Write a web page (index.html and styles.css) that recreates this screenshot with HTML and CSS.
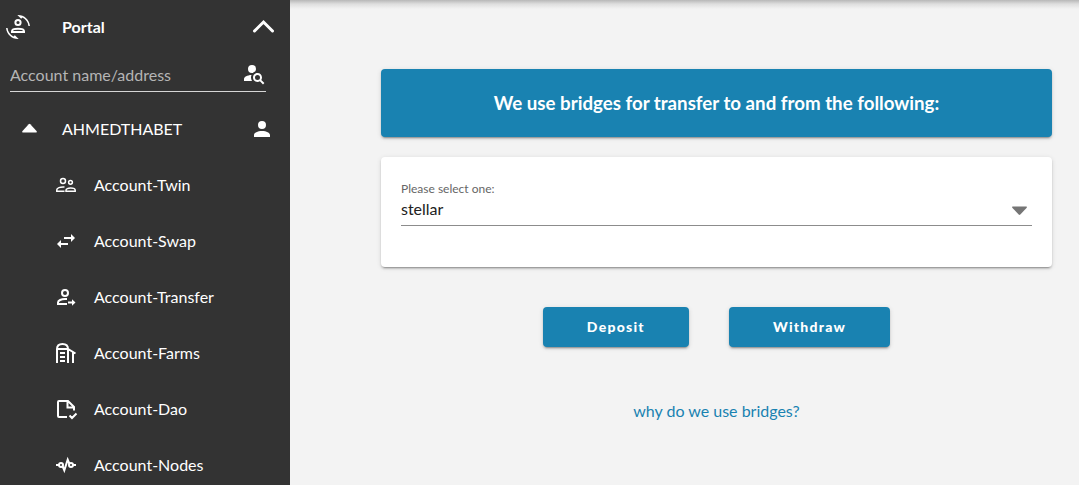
FILE: index.html
```
<!DOCTYPE html>
<html lang="en">
<head>
<meta charset="utf-8">
<title>Portal</title>
<link rel="stylesheet" href="styles.css">
</head>
<body>
<div class="app">
  <nav class="sidebar">
    <button class="portal" type="button" aria-expanded="true">
      <svg class="icon" viewBox="0 0 24 24"><path class="fill" d="M12 0L11.34.03L15.15 3.84L16.5 2.5C19.75 4.07 22.09 7.24 22.45 11H23.95C23.44 4.84 18.29 0 12 0M.05 13C.56 19.16 5.71 24 12 24L12.66 23.97L8.85 20.16L7.5 21.5C4.25 19.94 1.91 16.76 1.55 13H.05"/><circle cx="12" cy="7.500" r="2.600"/><path d="M6 17v-.8c0-1.500 3-2.400 6-2.400s6 .9 6 2.400v.8z"/></svg>
      <span class="portal-title">Portal</span>
      <svg class="icon" viewBox="0 0 24 24"><path class="chevron" d="M3.500 16L12.500 7l9 9"/></svg>
    </button>
    <div class="search">
      <input class="search-input" type="text" placeholder="Account name/address" aria-label="Account name/address">
      <svg class="icon" viewBox="0 0 24 24"><path class="fill" d="M15.5,12C18,12 20,14 20,16.5C20,17.38 19.75,18.21 19.31,18.9L22.39,22L21,23.39L17.88,20.32C17.19,20.75 16.37,21 15.5,21C13,21 11,19 11,16.5C11,14 13,12 15.5,12M15.5,14A2.5,2.5 0 0,0 13,16.5A2.5,2.5 0 0,0 15.5,19A2.5,2.5 0 0,0 18,16.5A2.5,2.5 0 0,0 15.5,14M10,4A4,4 0 0,1 14,8C14,8.91 13.69,9.75 13.18,10.43C12.32,10.75 11.55,11.26 10.91,11.9L10,12A4,4 0 0,1 6,8A4,4 0 0,1 10,4M2,20V18C2,15.88 5.31,14.14 9.5,14C9.18,14.78 9,15.62 9,16.5C9,17.79 9.38,19 10,20H2Z"/></svg>
    </div>
    <button class="account" type="button" aria-expanded="true">
      <svg class="icon" viewBox="0 0 24 24"><path class="fill" d="M4.700 15.500Q3.500 15.200 4.500 14L10.700 7.200q.8-.8 1.600 0L18.500 14q1 1.200-.2 1.500z"/></svg>
      <span class="account-name">AHMEDTHABET</span>
      <svg class="icon" viewBox="0 0 24 24"><path class="fill" d="M12,4A4,4 0 0,1 16,8A4,4 0 0,1 12,12A4,4 0 0,1 8,8A4,4 0 0,1 12,4M12,14C16.42,14 20,15.79 20,18V20H4V18C4,15.79 7.58,14 12,14Z"/></svg>
    </button>
    <ul class="menu">
      <li><a class="menu-item" href="#twin">
        <svg class="icon thin" viewBox="0 0 24 24"><circle cx="9" cy="8" r="2.500"/><circle cx="16.500" cy="9.300" r="1.900"/><path d="M10.500 18.200H2.800v-1.400c0-1.800 3.200-3 7.700-2.700M12 18.200v-1c0-1.300 2-2.200 4.600-2.200s4.600.9 4.600 2.200v1z"/></svg>
        Account-Twin</a></li>
      <li><a class="menu-item" href="#swap">
        <svg class="icon" viewBox="0 0 24 24"><path class="fill" d="M21,9L17,5V8H10V10H17V13M7,11L3,15L7,19V16H14V14H7V11Z"/></svg>
        Account-Swap</a></li>
      <li><a class="menu-item" href="#transfer">
        <svg class="icon" viewBox="0 0 24 24"><circle cx="11" cy="8" r="3"/><path d="M13 19H4v-1.500c0-2 3.200-3.500 7-3.500h2"/><path class="fill" d="M14 16.500h4v-2.300l3.500 3.300-3.500 3.300v-2.300h-4z"/></svg>
        Account-Transfer</a></li>
      <li><a class="menu-item" href="#farms">
        <svg class="icon" viewBox="0 0 24 24"><path d="M3 22V8c0-3 2-5 5.500-5S14 5 14 8v14M3 8h11l7.500 4.500M19 11.500V22M6 12h5M6 16h5M6 20h5"/></svg>
        Account-Farms</a></li>
      <li><a class="menu-item" href="#dao">
        <svg class="icon" viewBox="0 0 24 24"><path d="M13 20H5q-1 0-1-1V5q0-1 1-1h9l6 6v3.500M13.500 4v6.500H20M15.500 18.500l2.500 2.500 4.500-4.500"/></svg>
        Account-Dao</a></li>
      <li><a class="menu-item" href="#nodes">
        <svg class="icon" viewBox="0 0 24 24"><path d="M2 12h3M19 12h3M8.500 13l1.800 4.300L13.700 6.700l1.800 4.300"/><circle cx="7" cy="12" r="2"/><circle cx="17" cy="12" r="2"/></svg>
        Account-Nodes</a></li>
    </ul>
  </nav>
  <main class="main">
    <h3 class="banner">We use bridges for transfer to and from the following:</h3>
    <section class="card">
      <label class="field-label" for="bridge">Please select one:</label>
      <div class="field">
        <select class="select" id="bridge"><option>stellar</option></select>
        <svg class="icon select-arrow" viewBox="0 0 24 24"><path d="M4.700 8.500Q3.500 8.800 4.500 10l6.200 6.600q.8.8 1.600 0L18.500 10q1-1.200-.2-1.500z"/></svg>
      </div>
    </section>
    <div class="actions">
      <button class="button" type="button">Deposit</button>
      <button class="button" type="button">Withdraw</button>
    </div>
    <a class="help" href="#why">why do we use bridges?</a>
  </main>
</div>
</body>
</html>
```
FILE: styles.css
```
* {
  box-sizing: border-box;
}

body {
  margin: 0;
  font-family: Lato, "Open Sans", sans-serif;
  font-size: 16px;
  line-height: 24px;
  color: #212121;
  background: #f3f3f3;
}

button,
input,
select {
  font: inherit;
  color: inherit;
  background: none;
  border: 0;
  padding: 0;
}

.app {
  display: flex;
  height: 100vh;
}

.sidebar {
  flex: 0 0 290px;
  overflow: hidden;
  color: #fff;
  background: #333;
}

.icon {
  flex: none;
  width: 24px;
  height: 24px;
  fill: none;
  stroke: #fff;
  stroke-width: 2;
}

.icon .fill {
  fill: #fff;
  stroke: none;
}

.icon .chevron {
  stroke-width: 3;
  stroke-linecap: round;
}

.thin {
  stroke-width: 1.5;
}

.portal {
  display: flex;
  align-items: center;
  width: 100%;
  height: 54px;
  padding: 0 15px 0 6px;
  text-align: left;
}

.portal-title {
  flex: 1;
  padding-left: 32px;
  font-weight: 700;
}

.search {
  display: flex;
  align-items: center;
  height: 38px;
  margin: 0 24px 9px 10px;
  border-bottom: 1px solid #d6d6d6;
}

.search-input {
  flex: 1;
  min-width: 0;
  outline: 0;
  padding-top: 4px;
}

.search-input::placeholder {
  color: #b5b5b5;
  opacity: 1;
}

.account {
  display: flex;
  align-items: center;
  width: 100%;
  height: 56px;
  padding: 0 16px 0 18px;
  text-align: left;
}

.account-name {
  flex: 1;
  padding-left: 20px;
}

.menu {
  list-style: none;
  margin: 0;
  padding: 0;
}

.menu-item {
  display: flex;
  align-items: center;
  gap: 16px;
  height: 56px;
  padding-left: 54px;
  color: #fff;
  text-decoration: none;
}

.main {
  flex: 1;
  display: flex;
  flex-direction: column;
  padding: 69px 27px 0 91px;
  background: linear-gradient(#b8b8b8, #dedede 4px, #f3f3f3 9px);
}

.banner,
.card,
.button {
  border-radius: 4px;
  box-shadow: 0 3px 1px -2px rgba(0, 0, 0, 0.2), 0 2px 2px 0 rgba(0, 0, 0, 0.14), 0 1px 5px 0 rgba(0, 0, 0, 0.12);
}

.banner {
  margin: 0 0 20px;
  padding: 20px;
  line-height: 28px;
  text-align: center;
  color: #fff;
  background: #1982b1;
}

.card {
  padding: 22px 20px 41px;
  background: #fff;
}

.field-label {
  display: block;
  font-size: 12px;
  line-height: 20px;
  color: #666;
}

.field {
  position: relative;
  border-bottom: 1px solid #8c8c8c;
}

.select {
  display: block;
  width: 100%;
  height: 26px;
  padding-bottom: 6px;
  line-height: 20px;
  appearance: none;
  outline: 0;
}

.select-arrow {
  position: absolute;
  top: -1px;
  right: 0;
  fill: #757575;
  stroke: none;
}

.actions {
  display: flex;
  justify-content: center;
  gap: 40px;
  margin: 40px 0 52px;
}

.button {
  height: 40px;
  padding: 0 44px;
  font-size: 14px;
  font-weight: 900;
  letter-spacing: 0.09em;
  color: #fff;
  background: #1982b1;
}

.help {
  align-self: center;
  color: #1982b1;
  text-decoration: none;
}
```
